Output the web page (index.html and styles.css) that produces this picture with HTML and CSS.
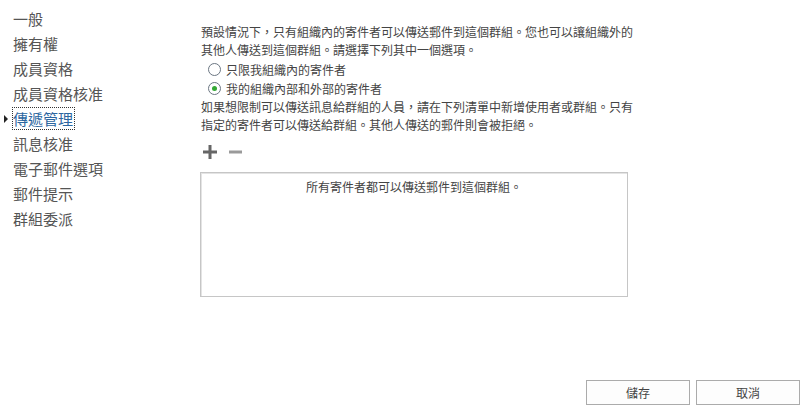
FILE: index.html
```html
<!DOCTYPE html>
<html lang="zh-Hant">
<head>
  <meta charset="UTF-8">
  <title>傳遞管理</title>
  <link rel="stylesheet" href="styles.css">
</head>
<body>
  <div class="page">
    <div class="layout">
      <ul class="nav">
        <li>一般</li>
        <li>擁有權</li>
        <li>成員資格</li>
        <li>成員資格核准</li>
        <li class="selected"><span class="arrow"></span><span class="focus">傳遞管理</span></li>
        <li>訊息核准</li>
        <li>電子郵件選項</li>
        <li>郵件提示</li>
        <li>群組委派</li>
      </ul>

      <div class="content">
        <p class="intro">預設情況下，只有組織內的寄件者可以傳送郵件到這個群組。您也可以讓組織外的其他人傳送到這個群組。請選擇下列其中一個選項。</p>
        <div class="option"><span class="radio"></span>只限我組織內的寄件者</div>
        <div class="option"><span class="radio checked"></span>我的組織內部和外部的寄件者</div>
        <p class="intro">如果想限制可以傳送訊息給群組的人員，請在下列清單中新增使用者或群組。只有指定的寄件者可以傳送給群組。其他人傳送的郵件則會被拒絕。</p>
        <div class="toolbar">
          <svg class="tool" width="14" height="14" viewBox="0 0 14 14"><path d="M7 0v14M0 7h14" stroke="#666" stroke-width="3"/></svg>
          <svg class="tool" width="13" height="14" viewBox="0 0 13 14"><path d="M0 7h13" stroke="#9a9a9a" stroke-width="3"/></svg>
        </div>
        <div class="list-box">所有寄件者都可以傳送郵件到這個群組。</div>
      </div>
    </div>

    <div class="footer">
      <button class="btn">儲存</button>
      <button class="btn">取消</button>
    </div>
  </div>
</body>
</html>
```

FILE: styles.css
```css
body {
  margin: 0;
  font-family: "Noto Sans CJK TC", "Noto Sans", sans-serif;
  color: #444;
  background: #fff;
}

.page {
  height: 415px;
  display: flex;
  flex-direction: column;
}

.layout {
  display: flex;
  flex: 1;
}

.nav {
  list-style: none;
  margin: 0;
  padding: 6px 0 0 13px;
  width: 188px;
}

.nav li {
  font-size: 15px;
  line-height: 25px;
  height: 25px;
  color: #555;
  position: relative;
}

.nav .selected {
  color: #2c66a0;
}

.nav .focus {
  outline: 1px dotted #333;
  padding: 0 1px 0 0;
}

.nav .arrow {
  position: absolute;
  left: -9px;
  top: 9px;
  width: 0;
  height: 0;
  border-top: 4px solid transparent;
  border-bottom: 4px solid transparent;
  border-left: 4px solid #222;
}

.content {
  padding-top: 23px;
  width: 432px;
  font-size: 12px;
}

.intro {
  margin: 0;
  line-height: 18px;
}

.option {
  display: flex;
  align-items: center;
  height: 19px;
  padding-left: 7px;
  gap: 5px;
}

.option:first-of-type {
  margin-top: 1px;
}

.radio {
  width: 11px;
  height: 11px;
  border: 1px solid #6b7682;
  border-radius: 50%;
  background: #fff;
  display: flex;
  align-items: center;
  justify-content: center;
}

.radio.checked::after {
  content: "";
  width: 5px;
  height: 5px;
  border-radius: 50%;
  background: #34a834;
}

.toolbar {
  display: flex;
  align-items: center;
  gap: 12px;
  height: 20px;
  margin-top: 8px;
  padding-left: 2px;
}

.list-box {
  margin: 10px 0 0 -1px;
  width: 428px;
  height: 125px;
  border: 1px solid #c6c6c6;
  box-shadow: inset 1px 1px 0 #e4e4e4;
  text-align: center;
  padding-top: 5px;
  box-sizing: border-box;
}

.footer {
  display: flex;
  justify-content: flex-end;
  gap: 6px;
  padding: 0 9px 10px 0;
}

.btn {
  width: 104px;
  height: 25px;
  border: 1px solid #ababab;
  background: #fdfdfd;
  color: #444;
  font-family: "Noto Sans CJK TC", "Noto Sans", sans-serif;
  font-size: 12px;
  padding: 0;
}
```
